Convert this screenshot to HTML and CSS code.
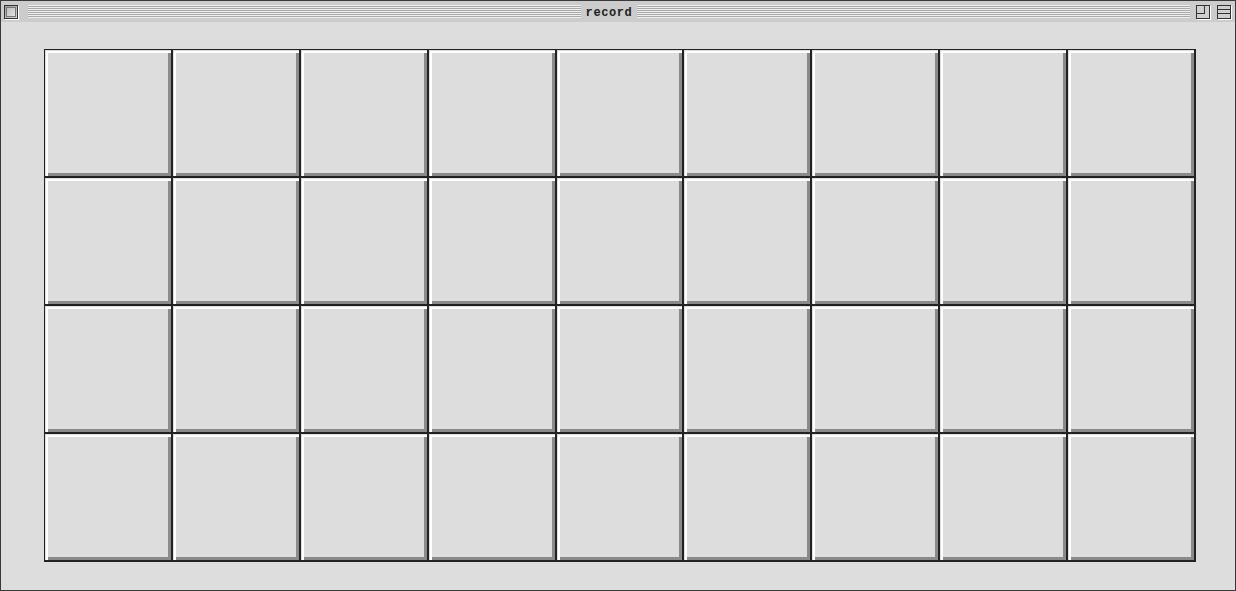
FILE: index.html
```html
<!DOCTYPE html>
<html>
<head>
<meta charset="utf-8">
<link rel="stylesheet" href="styles.css">
</head>
<body>
<div class="window">
  <div class="titlebar">
    <div class="box close-box"><span class="close-inner"></span></div>
    <div class="stripes left"></div>
    <div class="title">record</div>
    <div class="stripes right"></div>
    <div class="box zoom-box"><span class="zoom-inner"></span></div>
    <div class="box shade-box"><span class="shade-line"></span></div>
  </div>
  <div class="content">
    <div class="grid">
      <div class="cell"></div><div class="cell"></div><div class="cell"></div><div class="cell"></div><div class="cell"></div><div class="cell"></div><div class="cell"></div><div class="cell"></div><div class="cell"></div>
      <div class="cell"></div><div class="cell"></div><div class="cell"></div><div class="cell"></div><div class="cell"></div><div class="cell"></div><div class="cell"></div><div class="cell"></div><div class="cell"></div>
      <div class="cell"></div><div class="cell"></div><div class="cell"></div><div class="cell"></div><div class="cell"></div><div class="cell"></div><div class="cell"></div><div class="cell"></div><div class="cell"></div>
      <div class="cell"></div><div class="cell"></div><div class="cell"></div><div class="cell"></div><div class="cell"></div><div class="cell"></div><div class="cell"></div><div class="cell"></div><div class="cell"></div>
    </div>
  </div>
</div>
</body>
</html>
```

FILE: styles.css
```css
html, body {
  margin: 0;
  padding: 0;
  background: #dddddd;
}

.window {
  width: 1236px;
  height: 591px;
  box-sizing: border-box;
  border: 1px solid #3a3a3a;
  background: #dddddd;
  display: flex;
  flex-direction: column;
}

.titlebar {
  height: 21px;
  flex: none;
  background: #cccccc;
  display: flex;
  align-items: center;
  padding: 0 4px 0 3px;
}

.box {
  width: 12px;
  height: 12px;
  border: 1px solid #333;
  box-shadow: 1px 1px 0 #ffffff;
  position: relative;
  flex: none;
}

.close-box {
  background: linear-gradient(135deg, #9a9a9a, #d4d4d4);
}

.close-inner {
  position: absolute;
  left: 1px;
  top: 1px;
  right: 1px;
  bottom: 1px;
  border: 1px solid #777;
  background: linear-gradient(135deg, #bdbdbd, #e2e2e2);
}

.stripes {
  flex: 1;
  height: 13px;
  background: repeating-linear-gradient(to bottom, #eeeeee 0, #eeeeee 1px, #a9a9a9 1px, #a9a9a9 2px);
}

.stripes.left {
  margin-left: 10px;
}

.stripes.right {
  margin-right: 6px;
}

.title {
  font-family: "Liberation Mono", "DejaVu Sans Mono", monospace;
  font-weight: bold;
  font-size: 12px;
  letter-spacing: 0.6px;
  color: #222;
  padding: 2px 5px 0 5px;
  line-height: 20px;
}

.zoom-box {
  background: #cfcfcf;
}

.zoom-inner {
  position: absolute;
  left: 0;
  top: 0;
  width: 7px;
  height: 7px;
  border-right: 1px solid #333;
  border-bottom: 1px solid #333;
}

.shade-box {
  margin-left: 7px;
  background: #cfcfcf;
}

.shade-line {
  position: absolute;
  left: 0;
  right: 0;
  top: 3px;
  height: 3px;
  border-top: 1px solid #333;
  border-bottom: 1px solid #333;
}

.content {
  flex: 1;
  padding: 27px 39px 28px 43px;
}

.grid {
  height: 513px;
  box-sizing: border-box;
  background: #222222;
  padding: 1px 2px 2px 1px;
  display: grid;
  grid-template-columns: repeat(9, 1fr);
  grid-template-rows: repeat(4, 1fr);
  gap: 2px;
}

.cell {
  background: #dddddd;
  box-sizing: border-box;
  border-left: 1px solid #dddddd;
  border-top: 1px solid #dddddd;
  box-shadow: inset 2px 2px 0 #ffffff, inset -3px -3px 0 #8a8a8a;
}
```
